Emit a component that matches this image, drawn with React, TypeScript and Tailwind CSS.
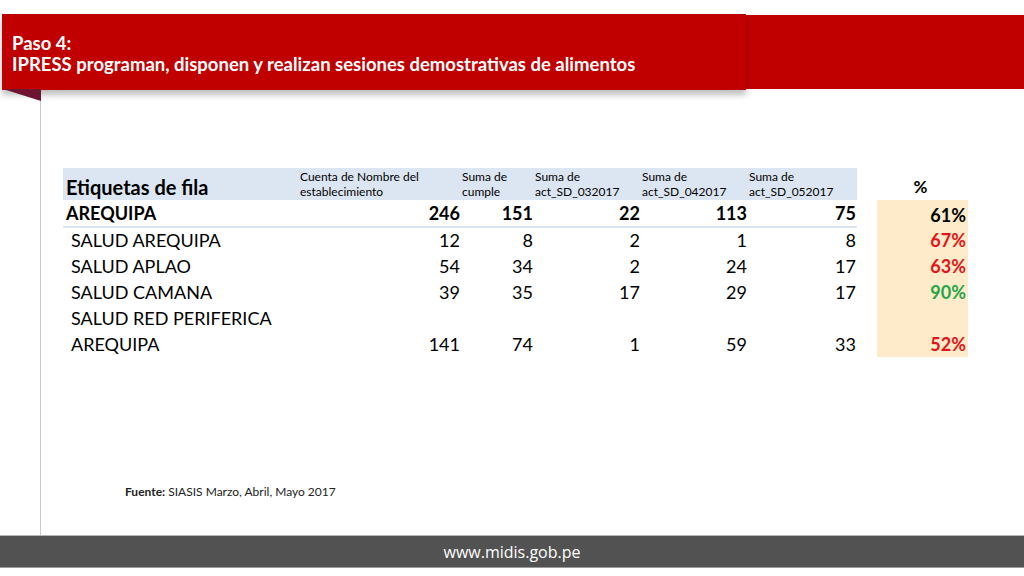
import React from "react";

type Row = {
	label: string[];
	values: number[];
	pct: string;
	pctColor: string;
	bold?: boolean;
};

const rows: Row[] = [
	{ label: ["AREQUIPA"], values: [246, 151, 22, 113, 75], pct: "61%", pctColor: "text-black", bold: true },
	{ label: ["SALUD AREQUIPA"], values: [12, 8, 2, 1, 8], pct: "67%", pctColor: "text-[#e3151c]" },
	{ label: ["SALUD APLAO"], values: [54, 34, 2, 24, 17], pct: "63%", pctColor: "text-[#e3151c]" },
	{ label: ["SALUD CAMANA"], values: [39, 35, 17, 29, 17], pct: "90%", pctColor: "text-[#1fa64a]" },
	{ label: ["SALUD RED PERIFERICA", "AREQUIPA"], values: [141, 74, 1, 59, 33], pct: "52%", pctColor: "text-[#e3151c]" },
];

const headers = [
	["Cuenta de Nombre del", "establecimiento"],
	["Suma de", "cumple"],
	["Suma de", "act_SD_032017"],
	["Suma de", "act_SD_042017"],
	["Suma de", "act_SD_052017"],
];

const cols = "grid grid-cols-[234px_164px_73px_107px_107px_109px_20px_91px]";

const App = () => {
	return (
		<div className="relative w-[1024px] h-[576px] bg-white overflow-hidden font-['Lato','Open_Sans',sans-serif]">
			{/* banda roja del titulo */}
			<div className="flex pt-[14px] h-[90px]">
				<div className="ml-[2px] w-[744px] h-[76px] bg-[#c00000] shadow-[0_5px_6px_rgba(0,0,0,0.25)] z-10 px-[10px] pt-[19px] text-white font-bold text-[18.5px] leading-[21px]">
					<div>Paso 4:</div>
					<div>IPRESS programan, disponen y realizan sesiones demostrativas de alimentos</div>
				</div>
				<div className="flex-1 mt-[1px] h-[74px] bg-[#c00000]" />
			</div>

			{/* pliegue */}
			<svg className="absolute left-[3px] top-[89px] z-20" width="38" height="12" viewBox="0 0 38 12">
				<polygon points="0,0 38,0 38,12" fill="#6e1432" />
			</svg>

			<div className="ml-[40px] h-[445px] border-l border-[#c9c9c9] pl-[22px] pt-[78px] flex flex-col">
				<div className={cols + " h-[32px]"}>
					<div className="bg-[#dce6f2] flex items-end pl-[3px] pb-[1px] font-bold text-[20px] leading-[24px] text-black">
						Etiquetas de fila
					</div>
					{headers.map((h, i) => (
						<div
							key={i}
							className={"bg-[#dce6f2] flex flex-col justify-center text-[12px] leading-[15px] text-black " + (i === 0 ? "pl-[3px]" : "pl-[1px]")}
						>
							<span>{h[0]}</span>
							<span>{h[1]}</span>
						</div>
					))}
					<div />
					<div className="flex items-end justify-center pb-[2px] pr-[4px] font-bold text-[17px] leading-[22px]">%</div>
				</div>

				{rows.map((r, idx) => (
					<div
						key={idx}
						className={
							cols +
							" text-[18px] text-black " +
							(r.bold ? "font-bold h-[27px] " : "") +
							(r.label.length > 1 ? "h-[52px]" : r.bold ? "" : "h-[26px]")
						}
					>
						<div className={"flex flex-col justify-end leading-[26px] " + (r.bold ? "pl-[3px] border-b-2 border-[#dce6f2]" : "pl-[8px]")}>
							{r.label.map((l) => (
								<span key={l}>{l}</span>
							))}
						</div>
						{r.values.map((v, i) => (
							<div
								key={i}
								className={"flex items-end justify-end pr-[1px] leading-[26px] " + (r.bold ? "border-b-2 border-[#dce6f2]" : "")}
							>
								{v}
							</div>
						))}
						<div />
						<div className={"bg-[#fdebc9] flex items-end justify-end pr-[2px] leading-[26px] font-bold " + r.pctColor}>
							{r.pct}
						</div>
					</div>
				))}

				<div className="mt-[126px] ml-[62px] text-[12px] text-[#222]">
					<span className="font-bold">Fuente:</span> SIASIS Marzo, Abril, Mayo 2017
				</div>
			</div>

			<div className="h-[32px] bg-[#525252] border-t border-[#b5b5b5] flex items-center justify-center text-white text-[16px] font-['Open_Sans',sans-serif]">
				www.midis.gob.pe
			</div>
			<div className="h-[9px] border-t border-[#9a9a9a] bg-white" />
		</div>
	);
};

export default App;
